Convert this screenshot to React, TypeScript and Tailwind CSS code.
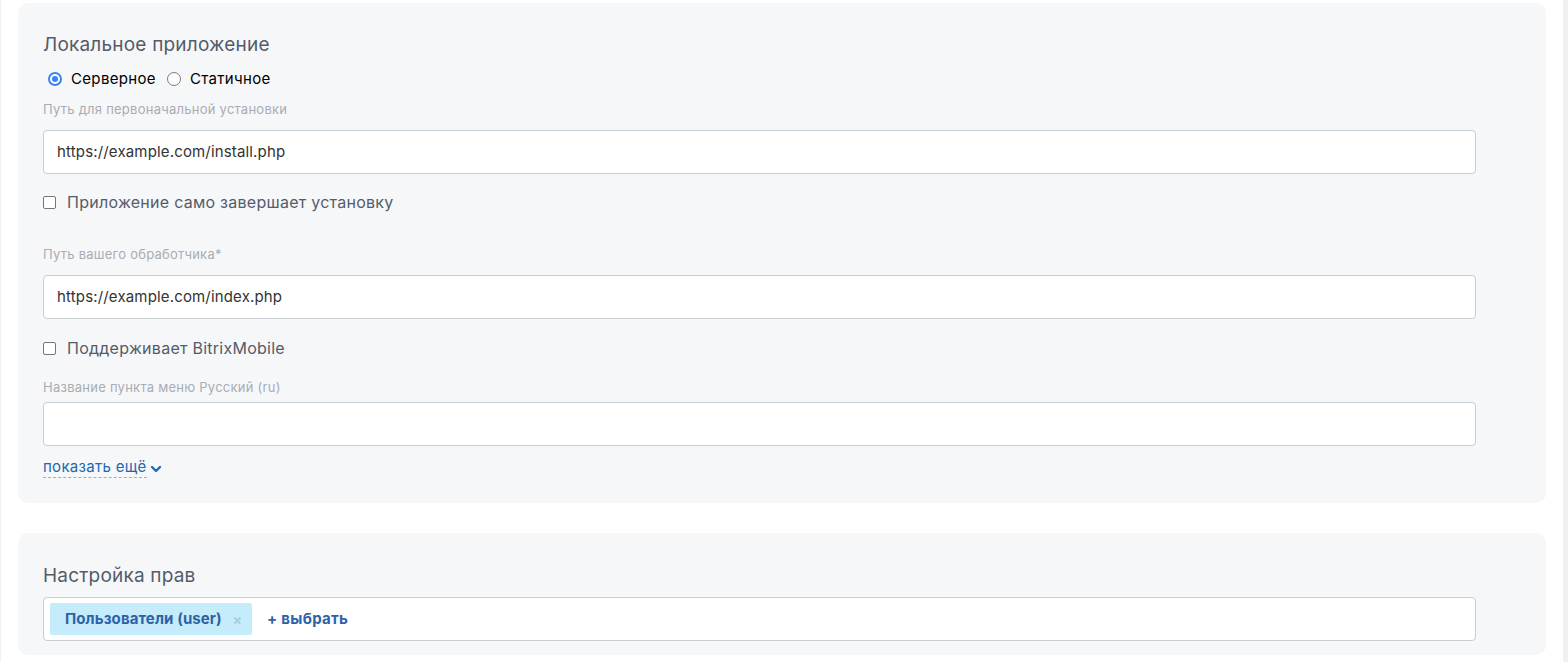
import { ChevronDown } from "lucide-react";

const font = { fontFamily: "Inter, 'Noto Sans', sans-serif" };

function Radio({ checked, label }: { checked?: boolean; label: string }) {
	return (
		<label className="flex items-center gap-[9px]">
			{checked ? (
				<span className="w-[14px] h-[14px] rounded-full bg-[#3b82f6] flex items-center justify-center">
					<span className="w-[10px] h-[10px] rounded-full bg-white flex items-center justify-center">
						<span className="w-[6px] h-[6px] rounded-full bg-[#3b82f6]"></span>
					</span>
				</span>
			) : (
				<span className="w-[14px] h-[14px] rounded-full border border-[#7a7a7a] bg-white"></span>
			)}
			<span className="text-[15px] leading-5 tracking-[0.33px] text-black">{label}</span>
		</label>
	);
}

function Checkbox({ label }: { label: string }) {
	return (
		<label className="flex items-center h-5">
			<span className="w-[13px] h-[13px] rounded-[2px] border border-[#767676] bg-white"></span>
			<span className="ml-[11px] text-[16px] leading-5 tracking-[0.26px] text-[#535c69]">{label}</span>
		</label>
	);
}

function FieldLabel({ children }: { children: React.ReactNode }) {
	return <div className="text-[13px] leading-4 tracking-[0.25px] text-[#a8adb4]">{children}</div>;
}

function TextBox({ value }: { value?: string }) {
	return (
		<div className="w-[1433px] h-[44px] rounded-[4px] border border-[#c6cdd3] bg-white flex items-center px-[13px] text-[15px] tracking-[0.16px] text-[#333]">
			{value}
		</div>
	);
}

export default function App() {
	return (
		<div className="flex h-[662px] bg-white overflow-hidden" style={font}>
			<div className="w-px bg-[#eef0f2]"></div>
			<div className="flex-1 px-[17px] pt-[3px] flex flex-col">
				{/* Local app */}
				<div className="h-[500px] rounded-[10px] bg-[#f6f7f9] pl-[25px] pt-[30px]">
					<h2 className="text-[19px] leading-6 tracking-[0.2px] text-[#535c69]">Локальное приложение</h2>
					<div className="flex items-center gap-[11px] mt-[12px] pl-[5px]">
						<Radio checked label="Серверное" />
						<Radio label="Статичное" />
					</div>
					<div className="mt-[12px]">
						<FieldLabel>Путь для первоначальной установки</FieldLabel>
					</div>
					<div className="mt-[13px]">
						<TextBox value="https://example.com/install.php" />
					</div>
					<div className="mt-[18px]">
						<Checkbox label="Приложение само завершает установку" />
					</div>
					<div className="mt-[34px]">
						<FieldLabel>Путь вашего обработчика*</FieldLabel>
					</div>
					<div className="mt-[13px]">
						<TextBox value="https://example.com/index.php" />
					</div>
					<div className="mt-[19px]">
						<Checkbox label="Поддерживает BitrixMobile" />
					</div>
					<div className="mt-[21px]">
						<FieldLabel>Название пункта меню Русский (ru)</FieldLabel>
					</div>
					<div className="mt-[7px]">
						<TextBox />
					</div>
					<div className="mt-[13px] flex items-center">
						<span className="text-[15px] leading-4 tracking-[0.3px] text-[#2067b0] border-b border-dashed border-[#8fb0d6] pb-[2px]">
							показать ещё
						</span>
						<ChevronDown className="w-[16px] h-[16px] text-[#2067b0] ml-[1px]" strokeWidth={3.5} />
					</div>
				</div>

				{/* Permissions */}
				<div className="mt-[30px] h-[122px] rounded-[10px] bg-[#f6f7f9] pl-[25px] pt-[31px]">
					<h2 className="text-[19px] leading-6 tracking-[0.2px] text-[#535c69]">Настройка прав</h2>
					<div className="mt-[9px] w-[1433px] h-[44px] rounded-[4px] border border-[#c6cdd3] bg-white flex items-center pl-[6px]">
						<div className="h-[32px] w-[202px] rounded-[2px] bg-[#c4ecfb] flex items-center pl-[15px]">
							<span className="text-[15px] font-bold tracking-[0.1px] text-[#2c63a8]">Пользователи (user)</span>
							<span className="ml-auto mr-[10px] text-[14px] font-bold text-[#a5cfe2]">×</span>
						</div>
						<span className="ml-[15px] text-[15px] font-bold tracking-[0.3px] text-[#2c63a8]">+ выбрать</span>
					</div>
				</div>
			</div>
			<div className="w-[5px] bg-[#eef1f4]"></div>
		</div>
	);
}
